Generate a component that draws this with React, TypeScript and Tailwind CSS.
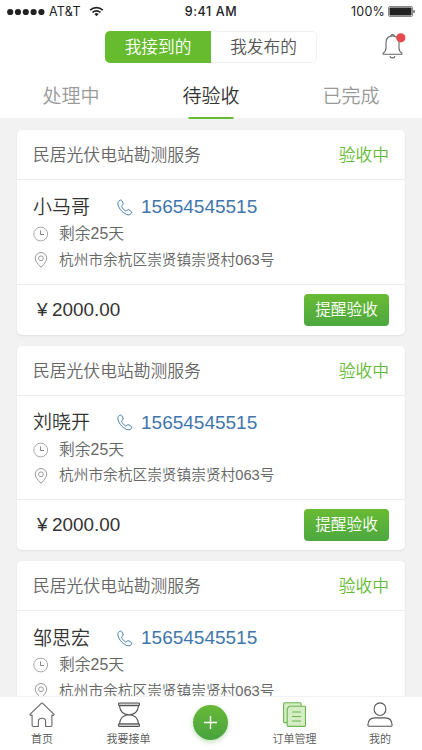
import { clsx } from "clsx";

const TABS = ["处理中", "待验收", "已完成"];
const ACTIVE_TAB = "待验收";

const ORDERS = [
  { name: "小马哥", phone: "15654545515" },
  { name: "刘晓开", phone: "15654545515" },
  { name: "邹思宏", phone: "15654545515" },
];

function StatusBar() {
  return (
    <div className="h-[23px] flex items-center justify-between px-[7px] pt-px font-['Inter',sans-serif] font-normal text-[12.5px] leading-none text-[#222]">
      <div className="flex items-center w-[150px]">
        <svg width="38" height="8" viewBox="0 0 38 8" fill="#222">
          <circle cx="3.2" cy="4" r="3.1" />
          <circle cx="11" cy="4" r="3.1" />
          <circle cx="18.8" cy="4" r="3.1" />
          <circle cx="26.6" cy="4" r="3.1" />
          <circle cx="34.4" cy="4" r="3.1" />
        </svg>
        <span className="ml-[4px] w-[33px] tracking-[0.3px]">AT&amp;T</span>
        <svg className="ml-[7px]" width="15" height="11" viewBox="0 0 14 11" fill="none" stroke="#222" strokeWidth="1.7">
          <path d="M.7 4.1a9 9 0 0 1 12.6 0M3 6.5a5.7 5.7 0 0 1 8 0" />
          <path d="M7 10.2 4.9 8.1a3 3 0 0 1 4.2 0z" fill="#222" stroke="none" />
        </svg>
      </div>
      <span className="font-medium tracking-[0.6px]">9:41 AM</span>
      <div className="flex items-center justify-end w-[150px]">
        <span className="tracking-[0.2px]">100%</span>
        <svg className="ml-[3px]" width="27" height="11" viewBox="0 0 27 11">
          <rect x=".5" y=".5" width="24" height="10" rx="1.5" fill="none" stroke="#888" />
          <rect x="1.5" y="1.5" width="22" height="8" rx=".8" fill="#222" />
          <path d="M25.5 3.7c1.6.7 1.6 2.9 0 3.6z" fill="#222" />
        </svg>
      </div>
    </div>
  );
}

function BellIcon() {
  return (
    <svg width="24" height="26" viewBox="0 0 24 26" fill="none" stroke="#666" strokeWidth="1.1" strokeLinejoin="round">
      <path d="M8.7 3.1c.3-2.1 3.3-2.1 3.6 0 3 .9 4.7 3.3 4.7 6.6v5.2c0 2.3 1 3.9 2.9 5.2v1.1H1.1v-1.1C3 18.8 4 17.2 4 14.9V9.7c0-3.3 1.7-5.7 4.7-6.6z" />
      <path d="M8.7 3.1c1.2-.3 2.4-.3 3.6 0M8 23.1c.3 2.3 4.7 2.3 5 0" />
      <circle cx="18.8" cy="4.8" r="4.6" fill="#e5484d" stroke="none" />
    </svg>
  );
}

function PhoneIcon() {
  return (
    <svg width="16" height="17" viewBox="0 0 16 17" fill="none" stroke="#4a7fb5" strokeWidth="1" strokeLinejoin="round">
      <path d="M3.4 1.1C1.5 1.6.6 3 .9 5c.9 5 5.600 9.900 10.200 10.800 1.500.2 2.900-.5 3.500-2 .2-.6 0-1.100-.5-1.500l-2.200-1.500c-.6-.4-1.200-.3-1.700.2l-.7.7c-.4.4-.8.3-1.200.1-1.700-1.200-2.900-2.600-3.600-4.200-.2-.5-.1-.9.3-1.200l.8-.6c.5-.4.6-.9.3-1.500L4.900 1.700c-.4-.6-.9-.8-1.500-.6z" />
    </svg>
  );
}

function ClockIcon() {
  return (
    <svg width="16" height="16" viewBox="0 0 16 16" fill="none" stroke="#aaa">
      <circle cx="7.7" cy="8" r="6.9" />
      <path d="M7.5 4.5v4H11" stroke="#888" />
    </svg>
  );
}

function PinIcon() {
  return (
    <svg width="16" height="16" viewBox="0 0 16 16" fill="none" stroke="#999">
      <path d="M8 15.3C4.500 11.700 2.300 9 2.300 6.200a5.700 5.700 0 0 1 11.400 0c0 2.800-2.200 5.500-5.700 9.100z" />
      <circle cx="8" cy="6.3" r="2.4" />
    </svg>
  );
}

function HomeIcon() {
  return (
    <svg width="26" height="26" viewBox="0 0 26 26" fill="none" stroke="#666" strokeWidth="1.1" strokeLinejoin="round">
      <path d="M12.3 1.3.9 12.3c.4 1.200 1.300 1.400 2.200.7v10.300c0 .8.4 1.200 1.200 1.200h5.100v-5.100c0-4.200 7.200-4.200 7.200 0v5.100h5.100c.8 0 1.200-.4 1.200-1.200V13c.9.7 1.800.5 2.200-.7L13.700 1.300c-.5-.4-.9-.4-1.400 0z" />
    </svg>
  );
}

function HourglassIcon() {
  return (
    <svg width="26" height="26" viewBox="0 0 26 26" fill="none" stroke="#555" strokeWidth="1.1">
      <rect x="2.6" y="1" width="20.8" height="2.6" rx=".6" fill="#ccc" />
      <rect x="2.6" y="21.9" width="20.8" height="2.6" rx=".6" fill="#ccc" />
      <path d="M3.4 3.6c.6 5.500 4.300 9 9.600 9.100 5.300-.1 9-3.600 9.600-9.100M3.400 21.900c.6-5.500 4.300-9 9.600-9.200 5.300.2 9 3.700 9.600 9.200" />
    </svg>
  );
}

function OrdersIcon() {
  return (
    <svg width="26" height="26" viewBox="0 0 26 26" fill="#d5edc4" stroke="#6cb552" strokeWidth="1.1">
      <rect x="1.6" y=".8" width="17.5" height="19.8" rx="1" />
      <path d="M5.2 6.7 7.4 4.2h15.200c.6 0 .9.3.9.9v18.400c0 .6-.3.9-.9.9H6.100c-.6 0-.9-.3-.9-.9z" strokeLinejoin="round" />
      <path d="M10 10h9M10 14.5h9M10 19h9" />
    </svg>
  );
}

function UserIcon() {
  return (
    <svg width="26" height="26" viewBox="0 0 26 26" fill="none" stroke="#555" strokeWidth="1.1">
      <ellipse cx="13" cy="7.2" rx="5.9" ry="6.3" />
      <path d="M2.4 24.3c-1 0-1.600-.5-1.500-1.500.3-4.500 2.900-6.900 7-6.900h10.200c4.100 0 6.700 2.400 7 6.900.1 1-.5 1.500-1.500 1.500z" />
    </svg>
  );
}

function OrderCard({ name, phone }: { name: string; phone: string }) {
  return (
    <article className="h-[204.5px] shrink-0 flex flex-col bg-white rounded-[5px] shadow-[0_1px_2px_rgba(0,0,0,0.08)]">
      <div className="h-[50px] shrink-0 flex items-center justify-between px-4 pt-[4px] border-b border-[#ececec] text-[16.8px] leading-none text-[#666]">
        <span>民居光伏电站勘测服务</span>
        <span className="text-[#67bb35]">验收中</span>
      </div>
      <div className="flex-1 pl-4 pt-[13px]">
        <div className="h-7 flex items-center text-[19px] leading-none">
          <span className="w-[84px] text-[#333]">{name}</span>
          <PhoneIcon />
          <span className="ml-[8px] pb-px text-[#3f76ae]">{phone}</span>
        </div>
        <div className="h-[26px] flex items-center gap-[10px] text-[15.8px] leading-none text-[#666]">
          <ClockIcon />
          <span>剩余25天</span>
        </div>
        <div className="h-[26px] flex items-center gap-[10px] text-[14.7px] leading-none text-[#666]">
          <PinIcon />
          <span>杭州市余杭区崇贤镇崇贤村063号</span>
        </div>
      </div>
      <div className="h-[51px] shrink-0 flex items-center justify-between pl-5 pr-4 border-t border-[#ececec]">
        <span className="flex items-center pt-px text-[18.9px] leading-none text-[#333]">
          <span className="w-[15px]">¥</span>2000.00
        </span>
        <button className="w-[85px] h-8 rounded-[4px] bg-linear-to-b from-[#69bb32] to-[#4ca83f] text-[15.7px] leading-none text-white">
          提醒验收
        </button>
      </div>
    </article>
  );
}

function NavItem({ icon: Icon, label }: { icon: () => React.ReactNode; label: string }) {
  return (
    <button className="w-[84px] flex flex-col items-center pt-[5px] text-[11px] leading-[16px] text-[#555]">
      <Icon />
      <span className="mt-[3px]">{label}</span>
    </button>
  );
}

export default function App() {
  return (
    <div className="w-[422px] h-[750px] flex flex-col overflow-hidden bg-[#f2f2f2] font-['Liberation_Sans','Noto_Sans_CJK_SC',sans-serif] font-[350]">
      <header className="h-[118px] shrink-0 bg-white flex flex-col">
        <StatusBar />

        {/* Received / published switch */}
        <div className="h-12 flex items-center">
          <div className="w-[105px]" />
          <div className="w-[212px] h-8 flex rounded-[5px] overflow-hidden text-[16.7px] leading-none">
            <button className="w-[106px] pt-[4px] bg-[#67bb2f] text-white">我接到的</button>
            <button className="flex-1 pt-[4px] border border-l-0 border-[#f0f0f0] rounded-r-[5px] text-[#555]">我发布的</button>
          </div>
          <button className="ml-[65px] -mt-[2px]" aria-label="通知">
            <BellIcon />
          </button>
        </div>

        <nav className="h-12 flex px-px">
          {TABS.map(tab => (
            <button
              key={tab}
              className={clsx(
                "relative flex-1 pt-[4px] text-[19px] leading-none",
                tab === ACTIVE_TAB ? "text-[#333]" : "text-[#999]"
              )}
            >
              {tab}
              {tab === ACTIVE_TAB && (
                <span className="absolute left-1/2 -translate-x-1/2 -bottom-px w-[45px] h-[2.5px] bg-[#67bb35]" />
              )}
            </button>
          ))}
        </nav>
      </header>

      <main className="flex-1 min-h-0 overflow-hidden flex flex-col gap-[11px] px-[17px] pt-[12px]">
        {ORDERS.map(order => (
          <OrderCard key={order.name} {...order} />
        ))}
      </main>

      <footer className="h-[54px] shrink-0 flex justify-between bg-white border-t border-[#f2f2f2]">
        <NavItem icon={HomeIcon} label="首页" />
        <div className="flex pl-px">
          <NavItem icon={HourglassIcon} label="我要接单" />
        </div>
        <div className="w-[79px] pr-[2px] flex justify-center pt-[8px]">
          <button
            className="w-[35px] h-[35px] flex items-center justify-center rounded-full bg-linear-to-b from-[#67b935] to-[#48a33f] shadow-[0_2px_5px_rgba(80,170,60,0.35)]"
            aria-label="发布"
          >
            <svg width="15" height="15" viewBox="0 0 15 15" stroke="#fff" strokeWidth="1.4">
              <path d="M7.5 1v13M1 7.5h13" />
            </svg>
          </button>
        </div>
        <NavItem icon={OrdersIcon} label="订单管理" />
        <NavItem icon={UserIcon} label="我的" />
      </footer>
    </div>
  );
}
